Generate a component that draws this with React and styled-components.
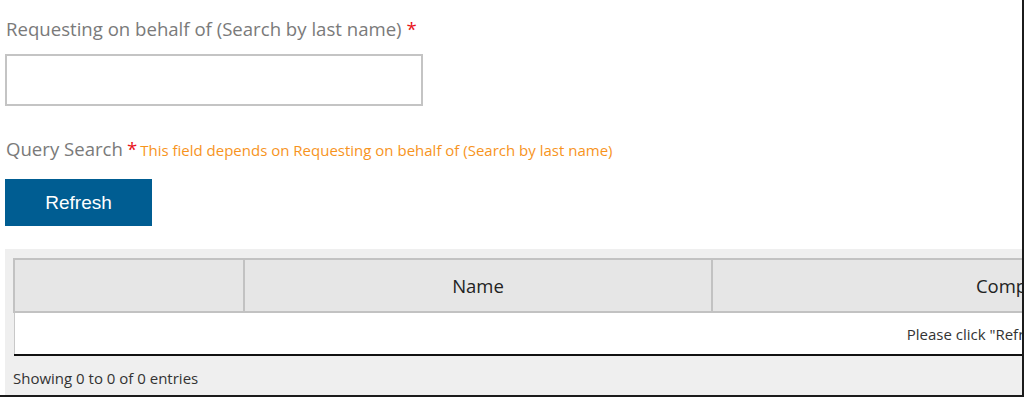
import React from "react";
import styled, { createGlobalStyle } from "styled-components";

const GlobalStyle = createGlobalStyle`
  html, body {
    margin: 0;
    padding: 0;
    background: #ffffff;
  }
  body {
    font-family: "Open Sans", "Noto Sans", Arial, sans-serif;
  }
`;

const Frame = styled.div`
  width: 1024px;
  height: 397px;
  box-sizing: border-box;
  border-right: 2px solid #1b1b1b;
  border-bottom: 2px solid #1b1b1b;
  overflow: hidden;
  padding: 17px 0 0 5px;
`;

const FieldLabel = styled.div`
  font-size: 18.6px;
  line-height: 24px;
  color: #7a7a7a;
  margin-left: 1px;
  white-space: nowrap;
`;

const Required = styled.span`
  color: #e8141b;
  margin-left: ${(p) => (p.tight ? 4 : 5)}px;
`;

const Hint = styled.span`
  color: #f7941d;
  font-size: 15px;
  margin-left: 3px;
`;

const TextInput = styled.input`
  display: block;
  box-sizing: border-box;
  width: 418px;
  height: 52px;
  margin: 13px 0 31px;
  border: 2px solid #c4c4c4;
  background: #fff;
  outline: none;
`;

const RefreshButton = styled.button`
  display: block;
  width: 147px;
  height: 47px;
  margin: 17px 0 23px;
  border: none;
  background: #005d92;
  color: #ffffff;
  font-family: "Liberation Sans", Arial, sans-serif;
  font-size: 19px;
  cursor: pointer;
`;

const Panel = styled.div`
  background: #efefef;
  padding: 9px 0 0 8px;
  height: 150px;
  box-sizing: border-box;
  overflow: hidden;
`;

const Table = styled.table`
  border-collapse: collapse;
  width: 2072px;
  table-layout: fixed;
  border-bottom: 2px solid #111;
`;

const HeadCell = styled.th`
  background: #e6e6e6;
  border: 2px solid #c2c2c2;
  height: 53px;
  box-sizing: border-box;
  font-weight: normal;
  font-size: 18.5px;
  color: #222;
  text-align: center;
  width: ${(p) => p.w}px;
`;

const EmptyCell = styled.td`
  background: #fff;
  height: 39px;
  font-size: 15px;
  color: #333;
  text-align: center;
  border-left: 1px solid #c8c8c8;
`;

const Info = styled.div`
  font-size: 15px;
  color: #333;
  padding: 12px 0 0 0;
`;

export default function App() {
  return (
    <>
      <GlobalStyle />
      <Frame>
        <FieldLabel>
          Requesting on behalf of (Search by last name)<Required>*</Required>
        </FieldLabel>
        <TextInput type="text" />
        <FieldLabel>
          Query Search<Required tight>*</Required>
          <Hint>This field depends on Requesting on behalf of (Search by last name)</Hint>
        </FieldLabel>
        <RefreshButton>Refresh</RefreshButton>
        <Panel>
          <Table>
            <thead>
              <tr>
                <HeadCell w={230}></HeadCell>
                <HeadCell w={468}>Name</HeadCell>
                <HeadCell w={610}>Company</HeadCell>
                <HeadCell w={764}>Email</HeadCell>
              </tr>
            </thead>
            <tbody>
              <tr>
                <EmptyCell colSpan={4}>Please click "Refresh" button to load data</EmptyCell>
              </tr>
            </tbody>
          </Table>
          <Info>Showing 0 to 0 of 0 entries</Info>
        </Panel>
      </Frame>
    </>
  );
}
